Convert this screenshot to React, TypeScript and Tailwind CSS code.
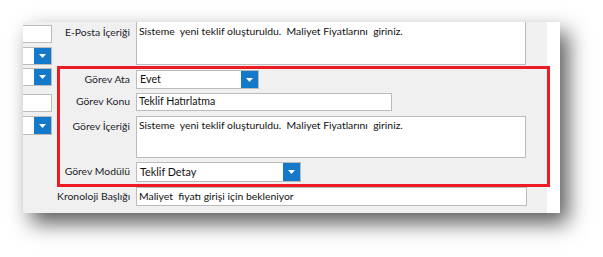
import React from 'react'

const text = "Sisteme  yeni teklif oluşturuldu.  Maliyet Fiyatlarını  giriniz."

function Arrow() {
  return (
    <svg width="7" height="4" viewBox="0 0 7 4">
      <path d="M0 0h7L3.5 4z" fill="#fff" />
    </svg>
  )
}

function Combo({ w, h, value }: { w: string; h: string; value?: string }) {
  return (
    <div className={`flex ${w} ${h} border border-[#bcbcbc] bg-white`}>
      <div className="flex-1 pl-[3px] leading-none flex items-center text-[10.8px] text-[#111]">{value}</div>
      <div className="w-[17px] bg-[#1379c8] flex items-center justify-center">
        <Arrow />
      </div>
    </div>
  )
}

function Label({ w, children, top }: { w: string; children: React.ReactNode; top?: boolean }) {
  return (
    <div
      className={`${w} shrink-0 text-right text-[10.4px] text-[#1c1d2b] whitespace-nowrap ${top ? 'pt-[3px]' : 'self-center'}`}
    >
      {children}
    </div>
  )
}

export default function App() {
  return (
    <div className="w-[603px] h-[257px] bg-white pt-[22px] pl-[23px] font-['Lato',sans-serif] overflow-hidden">
      <div className="flex w-[537px] h-[191px] bg-[linear-gradient(to_right,#f0f0f0_524px,#ffffff_524px)] shadow-[8px_10px_20px_rgba(0,0,0,0.65)]">
        {/* cut-off left column */}
        <div className="w-[29px] shrink-0 flex flex-col">
          <div className="mt-[3px] h-[18px] bg-white border border-l-0 border-[#bcbcbc]" />
          <div className="mt-[4px] h-[18px] flex bg-white border border-l-0 border-[#bcbcbc]">
            <div className="flex-1" />
            <div className="w-[17px] bg-[#1379c8] flex items-center justify-center"><Arrow /></div>
          </div>
          <div className="mt-[3px] h-[18px] flex bg-white border border-l-0 border-[#bcbcbc]">
            <div className="flex-1" />
            <div className="w-[17px] bg-[#1379c8] flex items-center justify-center"><Arrow /></div>
          </div>
          <div className="mt-[8px] h-[18px] bg-white border border-l-0 border-[#bcbcbc]" />
          <div className="mt-[4px] h-[19px] flex bg-white border border-l-0 border-[#bcbcbc]">
            <div className="flex-1" />
            <div className="w-[17px] bg-[#1379c8] flex items-center justify-center"><Arrow /></div>
          </div>
        </div>

        {/* form */}
        <div className="ml-[5px] w-[493px] shrink-0 flex flex-col">
          <div className="flex gap-[6px] h-[43px]">
            <Label w="w-[73px]" top>E-Posta İçeriği</Label>
            <div className="w-[390px] h-[43px] bg-white border border-t-0 border-[#bcbcbc] pl-[2px] pt-[2px] text-[10.4px] text-[#111] whitespace-pre">
              {text}
            </div>
          </div>

          <div className="mt-[1px] h-[121px] border-[3px] border-[#ec1c24] flex flex-col">
            <div className="mt-[1px] flex gap-[6px] h-[19px]">
              <Label w="w-[70px]">Görev Ata</Label>
              <Combo w="w-[123px]" h="h-[19px]" value="Evet" />
            </div>
            <div className="mt-[4px] flex gap-[6px] h-[18px]">
              <Label w="w-[70px]">Görev Konu</Label>
              <div className="w-[256px] h-[18px] bg-white border border-[#bcbcbc] pl-[2px] flex items-center text-[10.6px] text-[#111]">
                Teklif Hatırlatma
              </div>
            </div>
            <div className="mt-[5px] flex gap-[6px] h-[42px]">
              <Label w="w-[70px]" top>Görev İçeriği</Label>
              <div className="w-[390px] h-[42px] bg-white border border-[#bcbcbc] pl-[2px] pt-[1px] text-[10.4px] text-[#111] whitespace-pre">
                {text}
              </div>
            </div>
            <div className="mt-[4px] flex gap-[6px] h-[20px]">
              <Label w="w-[70px]">Görev Modülü</Label>
              <Combo w="w-[165px]" h="h-[20px]" value="Teklif Detay" />
            </div>
          </div>

          <div className="flex gap-[6px] h-[19px]">
            <Label w="w-[73px]">Kronoloji Başlığı</Label>
            <div className="w-[391px] h-[19px] bg-white border border-[#bcbcbc] pl-[2px] flex items-center text-[10.4px] text-[#111] whitespace-pre">
              Maliyet  fiyatı girişi için bekleniyor
            </div>
          </div>
        </div>
      </div>
    </div>
  )
}
